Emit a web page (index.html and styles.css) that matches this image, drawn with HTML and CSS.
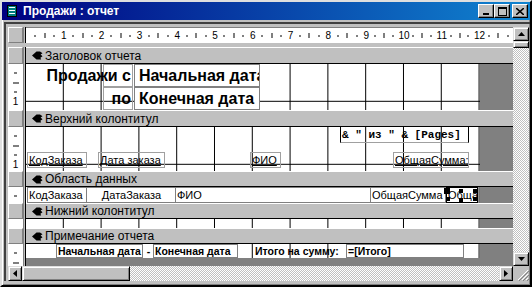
FILE: index.html
```html
<!DOCTYPE html>
<html lang="ru">
<head>
    <meta charset="UTF-8">
    <title>Продажи : отчет</title>
    <link rel="stylesheet" href="styles.css">
</head>
<body>
<div class="window">
    <div class="titlebar">
        <svg class="app-icon" width="10" height="12" viewBox="0 0 10 12">
            <rect x="0.5" y="0.5" width="9" height="11" fill="#008080" stroke="#000"/>
            <rect x="2" y="2" width="6" height="1" fill="#fff"/>
            <rect x="2" y="5" width="6" height="1" fill="#fff"/>
            <rect x="2" y="8" width="6" height="1" fill="#fff"/>
        </svg>
        <span class="title">Продажи : отчет</span>
        <div class="caption-btns">
            <span class="cap"><svg width="8" height="7"><rect x="1" y="5" width="6" height="2" fill="#000"/></svg></span>
            <span class="cap"><svg width="9" height="9"><rect x="0.5" y="0.5" width="8" height="8" fill="none" stroke="#000"/><rect x="0" y="0" width="9" height="2" fill="#000"/></svg></span>
            <span class="cap close"><svg width="8" height="7"><path d="M0 0 L8 7 M8 0 L0 7" stroke="#000" stroke-width="1.6"/></svg></span>
        </div>
    </div>

    <div class="workspace">
        <div class="design">
            <div class="row ruler-row">
                <div class="box"></div>
                <div class="sep"></div>
                <div class="hruler" id="hruler"></div>
            </div>
            <div class="gap-row"></div>

            <div class="row bar-row tall">
                <div class="box"></div><div class="sep"></div>
                <div class="bar"><svg class="hand" width="11" height="9" viewBox="0 0 11 9"><path d="M0 4.5 L4.5 0.5 H8 L10.5 2.2 L8.6 3.6 L10.5 5.2 L8.4 6.8 L9.2 8.5 H4.5 Z" fill="#000"/></svg>Заголовок отчета</div>
            </div>
            <div class="row" style="height:46px">
                <div class="vruler" data-marks="4"></div><div class="sep"></div>
                <div class="section"><div class="paper">
                    <div class="ctl lb big end" style="left:77px;top:0;width:30px;height:23px"><span>Продажи с</span></div>
                    <div class="ctl tb big" style="left:108px;top:0;width:126px;height:23px">Начальная дата</div>
                    <div class="ctl lb big end" style="left:77px;top:23px;width:30px;height:23px"><span>по</span></div>
                    <div class="ctl tb big" style="left:108px;top:23px;width:126px;height:23px">Конечная дата</div>
                </div></div>
            </div>

            <div class="row bar-row tall">
                <div class="box"></div><div class="sep"></div>
                <div class="bar"><svg class="hand" width="11" height="9" viewBox="0 0 11 9"><path d="M0 4.5 L4.5 0.5 H8 L10.5 2.2 L8.6 3.6 L10.5 5.2 L8.4 6.8 L9.2 8.5 H4.5 Z" fill="#000"/></svg>Верхний колонтитул</div>
            </div>
            <div class="row" style="height:44px">
                <div class="vruler" data-marks="4"></div><div class="sep"></div>
                <div class="section"><div class="paper">
                    <div class="ctl expr" style="left:314px;top:0;width:129px;height:16px">&amp; " из " &amp; [Pages]</div>
                    <div class="ctl lb small u" style="left:1px;top:25px;width:60px;height:16px">КодЗаказа</div>
                    <div class="ctl lb small u" style="left:72px;top:25px;width:67px;height:16px">Дата заказа</div>
                    <div class="ctl lb small u" style="left:224px;top:25px;width:31px;height:16px">ФИО</div>
                    <div class="ctl lb small u" style="left:367px;top:25px;width:76px;height:16px">ОбщаяСумма:</div>
                </div></div>
            </div>

            <div class="row bar-row">
                <div class="box"></div><div class="sep"></div>
                <div class="bar"><svg class="hand" width="11" height="9" viewBox="0 0 11 9"><path d="M0 4.5 L4.5 0.5 H8 L10.5 2.2 L8.6 3.6 L10.5 5.2 L8.4 6.8 L9.2 8.5 H4.5 Z" fill="#000"/></svg>Область данных</div>
            </div>
            <div class="row" style="height:16px">
                <div class="vruler" data-marks="1"></div><div class="sep"></div>
                <div class="section"><div class="paper">
                    <div class="ctl tb small" style="left:1px;top:0;width:60px;height:16px">КодЗаказа</div>
                    <div class="ctl tb small center" style="left:60px;top:0;width:90px;height:16px">ДатаЗаказа</div>
                    <div class="ctl tb small" style="left:149px;top:0;width:196px;height:16px">ФИО</div>
                    <div class="ctl tb small" style="left:344px;top:0;width:76px;height:16px">ОбщаяСумма</div>
                    <div class="ctl tb small selected" style="left:420px;top:0;width:32px;height:16px">ОбщаяСумма</div>
                    <span class="handle big-h" style="left:418px;top:1px"></span>
                    <span class="handle" style="left:433px;top:2px"></span>
                    <span class="handle" style="left:447px;top:2px"></span>
                    <span class="handle" style="left:420px;top:10px"></span>
                    <span class="handle" style="left:433px;top:11px"></span>
                    <span class="handle" style="left:447px;top:10px"></span>
                </div></div>
            </div>

            <div class="row bar-row">
                <div class="box"></div><div class="sep"></div>
                <div class="bar"><svg class="hand" width="11" height="9" viewBox="0 0 11 9"><path d="M0 4.5 L4.5 0.5 H8 L10.5 2.2 L8.6 3.6 L10.5 5.2 L8.4 6.8 L9.2 8.5 H4.5 Z" fill="#000"/></svg>Нижний колонтитул</div>
            </div>
            <div class="row" style="height:9px">
                <div class="vruler" data-marks="0"></div><div class="sep"></div>
                <div class="section"><div class="paper"></div></div>
            </div>

            <div class="row bar-row">
                <div class="box"></div><div class="sep"></div>
                <div class="bar"><svg class="hand" width="11" height="9" viewBox="0 0 11 9"><path d="M0 4.5 L4.5 0.5 H8 L10.5 2.2 L8.6 3.6 L10.5 5.2 L8.4 6.8 L9.2 8.5 H4.5 Z" fill="#000"/></svg>Примечание отчета</div>
            </div>
            <div class="row" style="height:22px">
                <div class="vruler" data-marks="2"></div><div class="sep"></div>
                <div class="section"><div class="paper" style="height:14px">
                    <div class="ctl tb bold" style="left:30px;top:0;width:87px;height:14px">Начальная дата</div>
                    <div class="ctl bold" style="left:117px;top:0;width:10px;height:14px;justify-content:center">-</div>
                    <div class="ctl tb bold" style="left:127px;top:0;width:85px;height:14px">Конечная дата</div>
                    <div class="ctl bold" style="left:228px;top:0;width:92px;height:14px">Итого на сумму:</div>
                    <div class="ctl tb bold" style="left:320px;top:0;width:118px;height:14px">=[Итого]</div>
                </div></div>
            </div>
        </div>

        <div class="vscroll">
            <span class="sbtn"><svg width="7" height="4"><path d="M3.5 0 L7 4 H0 Z" fill="#000"/></svg></span>
            <span class="thumb-v"></span>
            <span class="track"></span>
            <span class="sbtn"><svg width="7" height="4"><path d="M0 0 H7 L3.5 4 Z" fill="#000"/></svg></span>
        </div>
        <div class="hscroll">
            <span class="sbtn"><svg width="4" height="7"><path d="M4 0 V7 L0 3.5 Z" fill="#000"/></svg></span>
            <span class="thumb-h"></span>
            <span class="track"></span>
            <span class="sbtn"><svg width="4" height="7"><path d="M0 0 L4 3.5 L0 7 Z" fill="#000"/></svg></span>
        </div>
        <div class="grip">
            <svg width="12" height="12"><path d="M11 1 L1 11 M11 5 L5 11 M11 9 L9 11" stroke="#fff" stroke-width="1"/><path d="M12 2 L2 12 M12 6 L6 12 M12 10 L10 12" stroke="#808080" stroke-width="1"/></svg>
        </div>
    </div>
</div>
<script>
    // горизонтальная линейка: 12 см и хвост без цифры
    const hruler = document.getElementById('hruler');
    for (let i = 1; i <= 13; i++) {
        const num = i <= 12 ? '<b class="num">' + i + '</b>' : '';
        hruler.insertAdjacentHTML('beforeend',
            '<div class="cm"><span class="q"><i class="dot"></i></span><span class="q"><i class="tick"></i></span>' +
            '<span class="q"><i class="dot"></i></span><span class="q">' + num + '</span></div>');
    }
    // вертикальные линейки
    const marks = ['<i class="vdot"></i>', '<i class="vdash"></i>', '<i class="vdot"></i>', '<b class="vnum">1</b>'];
    document.querySelectorAll('.vruler').forEach(el => {
        const n = +el.dataset.marks;
        for (let i = 0; i < n; i++) {
            el.insertAdjacentHTML('beforeend', '<span class="vq">' + marks[i] + '</span>');
        }
    });
</script>
</body>
</html>
```

FILE: styles.css
```css
body {
    margin: 0;
    background: #c0c0c0;
    font-family: "Liberation Sans", Arial, sans-serif;
}
.window {
    width: 532px;
    height: 287px;
    box-sizing: border-box;
    background: #c0c0c0;
    border: 2px solid;
    border-color: #dfdfdf #000 #000 #dfdfdf;
    box-shadow: inset 1px 1px #fff, inset -1px -1px #808080;
    overflow: hidden;
}
.titlebar {
    height: 18px;
    display: flex;
    align-items: center;
    background: linear-gradient(to right, #000080, #1084d0);
    color: #fff;
    padding-left: 5px;
}
.app-icon {
    margin-right: 6px;
}
.title {
    font-size: 12px;
    font-weight: bold;
    flex: 1;
}
.caption-btns {
    display: flex;
    margin-right: 2px;
}
.cap {
    width: 16px;
    height: 14px;
    box-sizing: border-box;
    background: #c0c0c0;
    border: 1px solid;
    border-color: #fff #000 #000 #fff;
    box-shadow: inset -1px -1px #808080;
    display: flex;
    align-items: center;
    justify-content: center;
}
.cap.close {
    margin-left: 2px;
}
.workspace {
    margin-top: 2px;
    margin-left: 2px;
    border-top: 2px solid #404040;
    border-left: 2px solid #404040;
    padding: 3px 0 0 2px;
    display: grid;
    grid-template-columns: 505px 16px;
    grid-template-rows: 239px 15px;
}
.design {
    display: flex;
    flex-direction: column;
}
.row {
    display: flex;
    flex: none;
}
.ruler-row {
    height: 16px;
}
.gap-row {
    height: 4px;
}
.bar-row {
    height: 16px;
}
.bar-row.tall {
    height: 17px;
}
.box {
    width: 15px;
    box-sizing: border-box;
    background: #c0c0c0;
    border: 1px solid;
    border-color: #fff #808080 #808080 #fff;
}
.sep {
    width: 3px;
    box-sizing: border-box;
    border-left: 1px solid #808080;
    border-right: 1px solid #000;
}
.hruler {
    width: 487px;
    background: #fff;
    border-top: 1px solid #808080;
    display: flex;
    overflow: hidden;
}
.cm {
    flex: 0 0 37.8px;
    display: flex;
}
.q {
    flex: 1;
    display: flex;
    justify-content: flex-end;
    align-items: center;
}
.q > * {
    transform: translateX(50%);
}
.dot {
    width: 1px;
    height: 2px;
    background: #000;
}
.tick {
    width: 1px;
    height: 5px;
    background: #000;
}
.num, .vnum {
    font-size: 10px;
    font-weight: normal;
    line-height: 10px;
}
.vruler {
    width: 15px;
    background: #fff;
    display: flex;
    flex-direction: column;
    overflow: hidden;
}
.vq {
    flex: 0 0 9.45px;
    display: flex;
    justify-content: center;
    align-items: flex-end;
}
.vq > * {
    transform: translateY(50%);
}
.vdot {
    width: 3px;
    height: 1px;
    background: #000;
}
.vdash {
    width: 6px;
    height: 1px;
    background: #000;
}
.bar {
    width: 487px;
    box-sizing: border-box;
    background: #c0c0c0;
    border-top: 1px solid #fff;
    border-bottom: 1px solid #000;
    display: flex;
    align-items: center;
    padding-left: 6px;
    font-size: 12px;
    color: #000;
}
.hand {
    margin-right: 2px;
}
.section {
    width: 487px;
    background: #808080;
}
.paper {
    position: relative;
    width: 454px;
    height: 100%;
    background-color: #fff;
    background-image:
        linear-gradient(to right, transparent calc(100% - 1px), #000 0),
        linear-gradient(to bottom, transparent calc(100% - 1px), #000 0);
    background-size: 37.8px 37.8px;
}
.ctl {
    position: absolute;
    box-sizing: border-box;
    white-space: nowrap;
    overflow: hidden;
    color: #000;
    display: flex;
    align-items: center;
    padding-left: 1px;
}
.tb {
    background: #fff;
    border: 1px solid #808080;
}
.lb {
    border: 1px solid #a0a0a0;
}
.big {
    font-size: 16px;
    font-weight: bold;
    padding-left: 4px;
}
.big.end {
    overflow: visible;
    justify-content: flex-end;
    padding: 0 1px 0 0;
}
.small {
    font-size: 11px;
}
.u {
    text-decoration: underline;
}
.center {
    justify-content: center;
}
.bold {
    font-size: 10.5px;
    font-weight: bold;
}
.expr {
    font-family: "Liberation Mono", "Courier New", monospace;
    font-weight: bold;
    font-size: 11px;
    border: 1px solid #000;
    border-bottom-color: #a0a0a0;
    border-top: none;
}
.selected {
    border-color: #000;
}
.handle {
    position: absolute;
    width: 4px;
    height: 4px;
    background: #000;
}
.handle.big-h {
    width: 6px;
    height: 6px;
}
.vscroll {
    display: flex;
    flex-direction: column;
}
.hscroll {
    display: flex;
}
.sbtn {
    flex: none;
    width: 16px;
    height: 14px;
    box-sizing: border-box;
    background: #c0c0c0;
    border: 1px solid;
    border-color: #dfdfdf #000 #000 #dfdfdf;
    box-shadow: inset 1px 1px #fff, inset -1px -1px #808080;
    display: flex;
    align-items: center;
    justify-content: center;
}
.hscroll .sbtn {
    width: 14px;
    height: 15px;
}
.thumb-v, .thumb-h {
    flex: none;
    box-sizing: border-box;
    background: #c0c0c0;
    border: 1px solid;
    border-color: #dfdfdf #000 #000 #dfdfdf;
    box-shadow: inset 1px 1px #fff, inset -1px -1px #808080;
}
.thumb-v {
    height: 7px;
}
.thumb-h {
    width: 108px;
}
.track {
    flex: 1;
    background: repeating-conic-gradient(#c0c0c0 0 25%, #fff 0 50%) 0 0 / 2px 2px;
}
.grip {
    background: #c0c0c0;
    display: flex;
    align-items: flex-end;
    justify-content: flex-end;
}
```
